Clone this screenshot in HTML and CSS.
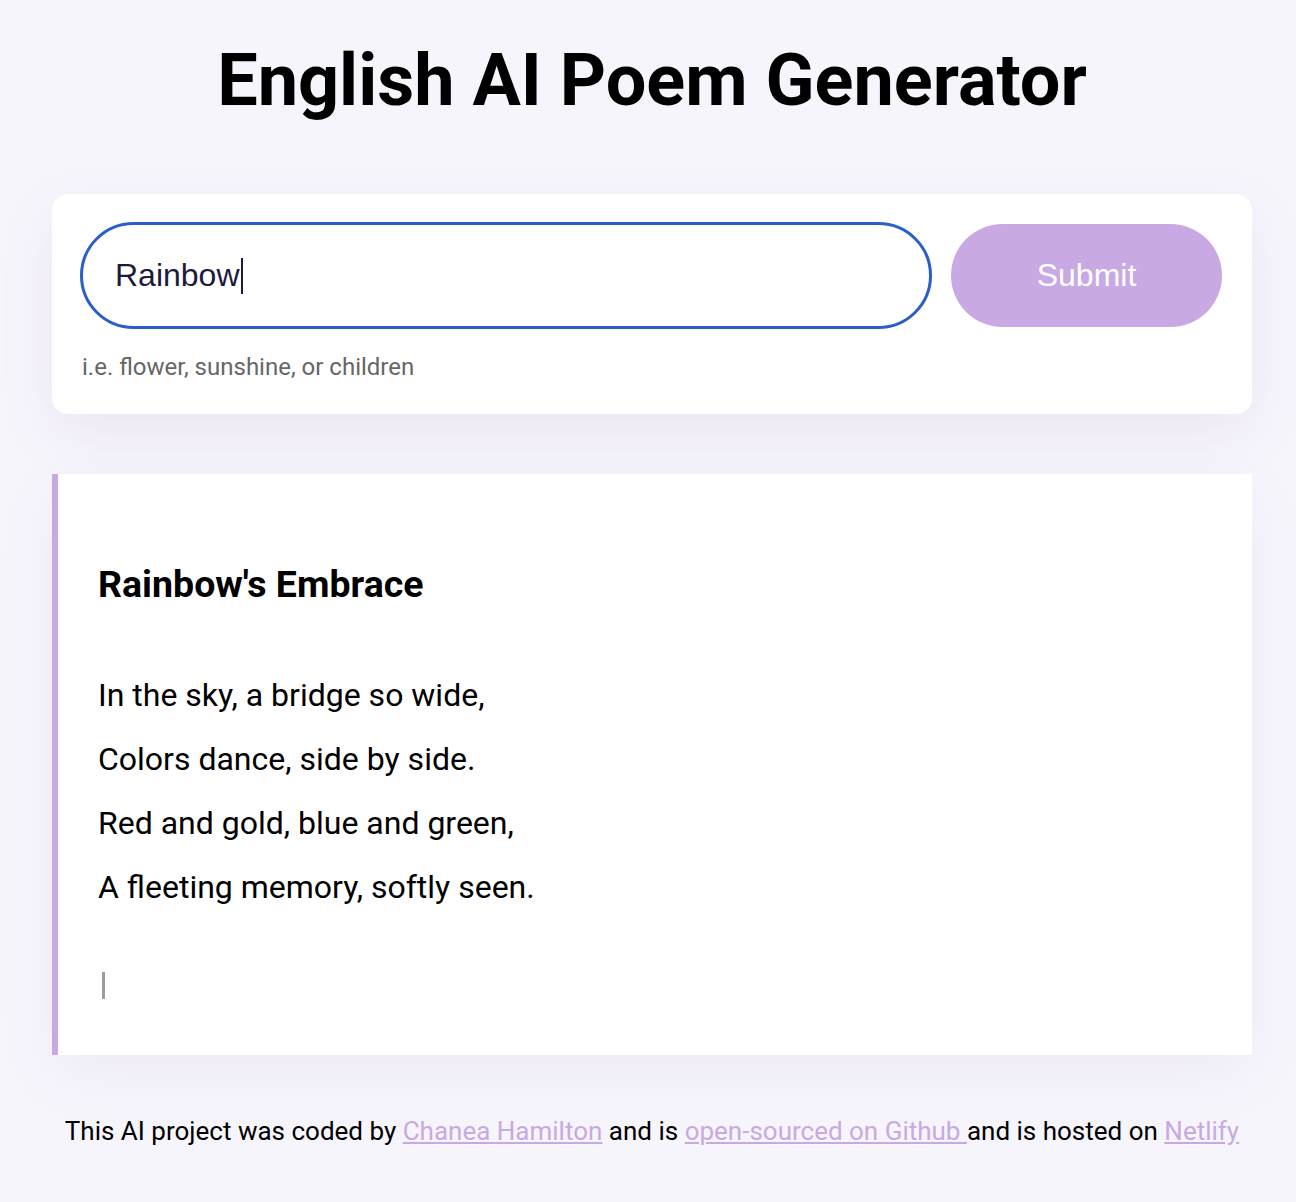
FILE: index.html
```html
<!DOCTYPE html>
<html lang="en">
<head>
<meta charset="utf-8">
<title>English AI Poem Generator</title>
<link rel="stylesheet" href="styles.css">
</head>
<body>
<div class="container">
  <header class="header">
    <h1 class="title">English AI Poem Generator</h1>
  </header>
  <div class="form-card">
    <form class="form">
      <div class="form-row">
        <div class="input-field"><span class="input-text">Rainbow</span><span class="caret"></span></div>
        <button type="button" class="submit">Submit</button>
      </div>
      <div class="hint">i.e. flower, sunshine, or children</div>
    </form>
  </div>
  <div class="poem">
    <h2 class="poem-title">Rainbow's Embrace</h2>
    <p class="poem-line">In the sky, a bridge so wide,</p>
    <p class="poem-line">Colors dance, side by side.</p>
    <p class="poem-line">Red and gold, blue and green,</p>
    <p class="poem-line">A fleeting memory, softly seen.</p>
    <div class="typing-cursor"></div>
  </div>
  <footer class="footer">
    This AI project was coded by <a href="#">Chanea Hamilton</a> and is <a href="#">open-sourced on Github </a>and is hosted on <a href="#">Netlify</a>
  </footer>
</div>
</body>
</html>
```

FILE: styles.css
```css
* { box-sizing: border-box; }
html, body {
  margin: 0;
  padding: 0;
  background: #f7f5fc;
  font-family: Roboto, "Liberation Sans", sans-serif;
  color: #000;
}
.container {
  width: 1200px;
  margin-left: 52px;
  padding-top: 36px;
}
.header { text-align: center; }
.title {
  margin: 0;
  font-size: 72px;
  font-weight: 700;
  line-height: 90px;
}
.form-card {
  margin-top: 68px;
  background: #fff;
  border-radius: 16px;
  padding: 28px 30px 33px 28px;
  box-shadow: 0 20px 60px rgba(90, 70, 140, 0.08);
}
.form-row {
  display: flex;
  align-items: center;
  gap: 19px;
}
.input-field {
  flex: 0 0 852px;
  height: 107px;
  border: 3px solid #2a5ec8;
  border-radius: 54px;
  display: flex;
  align-items: center;
  padding-left: 32px;
  font-family: "Liberation Sans", Arial, sans-serif;
  font-size: 32px;
  color: #1f1a3d;
}
.caret {
  display: inline-block;
  width: 2px;
  height: 36px;
  background: #1f1a3d;
  margin-left: 1px;
}
.submit {
  flex: 0 0 271px;
  height: 103px;
  border: none;
  border-radius: 52px;
  background: #c8a9e3;
  color: #fff;
  font-family: "Liberation Sans", Arial, sans-serif;
  font-size: 32px;
}
.hint {
  margin-top: 24px;
  padding-left: 2px;
  font-size: 24px;
  color: #666;
}
.poem {
  margin-top: 60px;
  background: #fff;
  border-left: 6px solid #c8a9e3;
  padding: 88px 40px 56px 40px;
  box-shadow: 0 20px 60px rgba(90, 70, 140, 0.06);
}
.poem-title {
  margin: 0 0 57px 0;
  font-size: 37.5px;
  font-weight: 700;
  line-height: 44px;
}
.poem-line {
  margin: 0;
  font-size: 32px;
  line-height: 64px;
}
.typing-cursor {
  margin-top: 53px;
  margin-left: 4px;
  width: 3px;
  height: 27px;
  background: #9c9c9c;
}
.footer {
  text-align: center;
  padding: 61px 0 40px;
  font-size: 26px;
}
.footer a {
  color: #c8a9e3;
  text-decoration: underline;
}
```
